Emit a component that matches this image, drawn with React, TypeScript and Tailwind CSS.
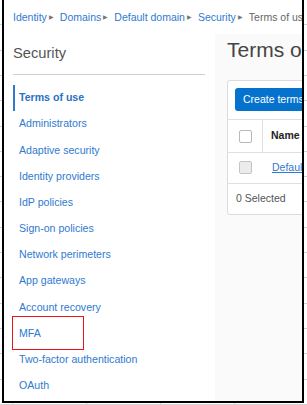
const navItems = [
  "Terms of use",
  "Administrators",
  "Adaptive security",
  "Identity providers",
  "IdP policies",
  "Sign-on policies",
  "Network perimeters",
  "App gateways",
  "Account recovery",
  "MFA",
  "Two-factor authentication",
  "OAuth",
];

const crumbs = ["Identity", "Domains", "Default domain", "Security"];

function Checkbox({ filled }: { filled?: boolean }) {
  return (
    <div
      className={
        filled
          ? "w-[13px] h-[13px] rounded-[2px] border border-[#c4c4c4] bg-[#ececec]"
          : "w-[13px] h-[13px] rounded-[2px] border border-[#b8b8b8] bg-white"
      }
    />
  );
}

export default function App() {
  return (
    <div className="w-[307px] h-[405px] overflow-hidden bg-white bg-[image:repeating-linear-gradient(to_bottom,transparent_0,transparent_24.3px,#d2d2d2_24.3px,#d2d2d2_25.3px),repeating-linear-gradient(to_right,transparent_0,transparent_12px,#d2d2d2_12px,#d2d2d2_13px,transparent_13px,transparent_74px)] font-['Liberation_Sans',Arial,sans-serif]">
      <div className="ml-[2px] w-[302px] h-[403px] border-l-2 border-r-2 border-b-2 border-black bg-white overflow-hidden flex flex-col">
        {/* breadcrumb */}
        <div className="h-[34px] pl-[9px] flex items-center whitespace-nowrap text-[10.5px] pt-[1px]">
          {crumbs.map((c) => (
            <span key={c} className="flex items-center">
              <span className="text-[#2f7ad0]">{c}</span>
              <span className="text-[#777] text-[6px] ml-[2px] mr-[6px]">▶</span>
            </span>
          ))}
          <span className="text-[#666]">Terms of use</span>
        </div>

        <div className="flex flex-1">
          {/* sidebar */}
          <div className="w-[211px] shrink-0 pl-[9px]">
            <div className="mt-[10px] h-[18px] leading-[18px] text-[14.7px] text-[#555]">Security</div>
            <div className="mt-[12px] w-[192px] h-[1px] bg-[#cfcfcf]" />
            <div className="mt-[10px] flex flex-col">
              {navItems.map((item, i) => (
                <div
                  key={item}
                  className={
                    i === 0
                      ? "relative h-[26.2px] flex items-center border-l-2 border-[#2f7ad0] pl-[4px] text-[10.6px] font-bold text-[#2a72c4]"
                      : "relative h-[26.2px] flex items-center border-l-2 border-transparent pl-[4px] text-[10.6px] text-[#2f7ad0]"
                  }
                >
                  {item}
                  {item === "MFA" && (
                    <div className="absolute left-[-3px] top-[-5px] w-[72px] h-[34px] border border-[#e8141a]" />
                  )}
                </div>
              ))}
            </div>
          </div>

          {/* main */}
          <div className="flex-1 bg-[#fafafa] pl-[12px] overflow-hidden">
            <div className="mt-[4px] h-[24px] leading-[24px] text-[21px] text-[#454545] whitespace-nowrap">Terms of use</div>
            <div className="mt-[18px] w-[200px] bg-white border border-[#dcdcdc] rounded-[3px]">
              <div className="pt-[7px] pl-[7px] pb-[8px]">
                <div className="h-[23px] w-[120px] rounded-[3px] bg-[#0572ce] text-white text-[10.5px] flex items-center pl-[8px] whitespace-nowrap">
                  Create terms of use
                </div>
              </div>
              <div className="h-[33px] flex border-t border-[#e0e0e0]">
                <div className="w-[35px] flex items-center justify-center border-r border-[#e0e0e0]">
                  <Checkbox />
                </div>
                <div className="pl-[8px] flex items-center text-[10.5px] font-bold text-[#222]">Name</div>
              </div>
              <div className="h-[30.5px] flex border-t border-[#e0e0e0]">
                <div className="w-[35px] flex items-center justify-center">
                  <Checkbox filled />
                </div>
                <div className="pl-[9px] flex items-center text-[10.5px] text-[#2f7ad0] underline whitespace-nowrap">
                  Default terms of use
                </div>
              </div>
              <div className="h-[31px] flex items-center border-t border-[#e0e0e0] pl-[8px] text-[10.5px] text-[#555]">
                0 Selected
              </div>
            </div>
          </div>
        </div>
      </div>
    </div>
  );
}
